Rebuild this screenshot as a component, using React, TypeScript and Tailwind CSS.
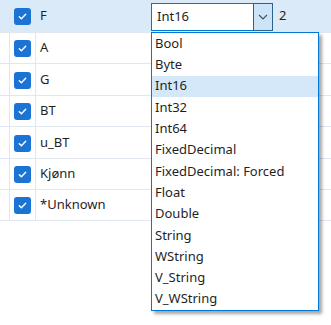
import React from 'react';

const rows = [
  { name: 'F', h: 'h-[33px]', selected: true },
  { name: 'A', h: 'h-[31px]' },
  { name: 'G', h: 'h-[32px]' },
  { name: 'BT', h: 'h-[31px]' },
  { name: 'u_BT', h: 'h-[32px]' },
  { name: 'Kjønn', h: 'h-[31px]' },
  { name: '*Unknown', h: 'h-[31px]' },
];

const types = [
  'Bool',
  'Byte',
  'Int16',
  'Int32',
  'Int64',
  'FixedDecimal',
  'FixedDecimal: Forced',
  'Float',
  'Double',
  'String',
  'WString',
  'V_String',
  'V_WString',
];

const Check: React.FC = () => (
  <div className="w-[17px] h-[17px] rounded-[3px] bg-[#1b74d4] flex items-center justify-center">
    <svg width="11" height="11" viewBox="0 0 11 11" fill="none">
      <path d="M2.3 5.8 L4.4 7.8 L8.7 3.2" stroke="white" strokeWidth="1.4" strokeLinecap="round" strokeLinejoin="round" />
    </svg>
  </div>
);

const TypeSelect: React.FC = () => (
  <div className="mt-[3px] h-[28px] w-[122px] flex border border-[#0078d7] bg-white">
    <div className="flex-1 pl-[5px] flex items-center">Int16</div>
    <div className="w-[20px] -my-px -mr-px bg-[#cce4f7] border border-[#2c628b] flex items-center justify-center">
      <svg width="10" height="6" viewBox="0 0 10 6" fill="none">
        <path d="M1 1 L5 5 L9 1" stroke="#44505c" strokeWidth="1.1" />
      </svg>
    </div>
  </div>
);

export default function App() {
  return (
    <div className="relative w-[331px] h-[325px] bg-white text-[13px] text-[#1f1f1f] font-['Noto_Sans',sans-serif] overflow-hidden">
      {rows.map((r) => (
        <div
          key={r.name}
          className={`flex border-b border-[#e1e7ef] ${r.h} ${r.selected ? 'bg-[#daeaf9]' : 'bg-white'}`}
        >
          <div className="w-[10px] border-r border-[#e1e7ef]" />
          <div className="w-[26px] border-r border-[#e1e7ef] flex items-center justify-center pt-px">
            <Check />
          </div>
          <div className="w-[115px] pl-[4px] flex items-center">{r.name}</div>
          {r.selected && (
            <>
              <TypeSelect />
              <div className="pl-[6px] flex items-center">2</div>
            </>
          )}
        </div>
      ))}

      <div className="absolute left-[151px] top-[32px] w-[168px] border border-[#0078d7] bg-white shadow-[3px_3px_3px_rgba(0,0,0,0.35)]">
        {types.map((t) => (
          <div
            key={t}
            className={`h-[21.3px] pl-[3px] flex items-center ${t === 'Int16' ? 'bg-[#d5e8f9]' : ''}`}
          >
            {t}
          </div>
        ))}
      </div>
    </div>
  );
}
